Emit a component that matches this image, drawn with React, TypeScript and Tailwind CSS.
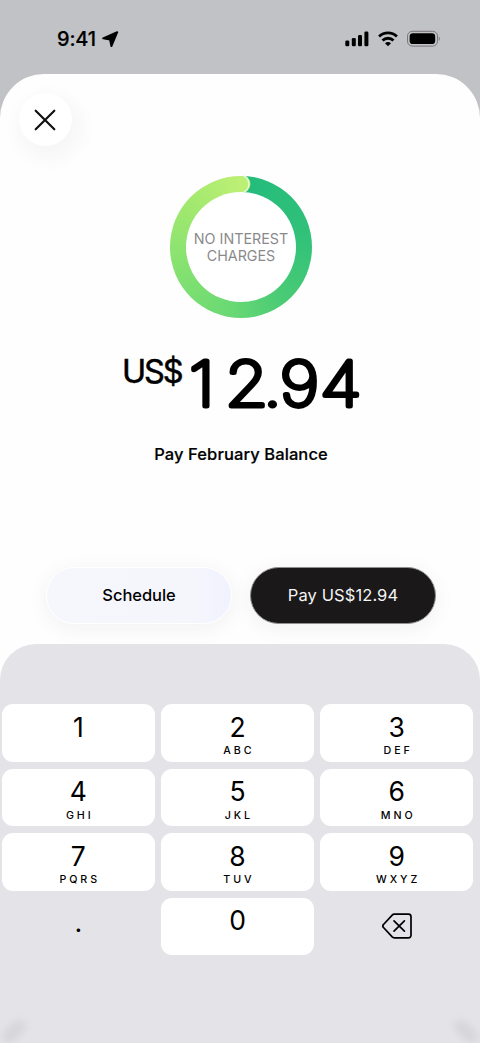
import { clsx } from "clsx";

const keys = [
  { digit: "1", letters: "" },
  { digit: "2", letters: "ABC" },
  { digit: "3", letters: "DEF" },
  { digit: "4", letters: "GHI" },
  { digit: "5", letters: "JKL" },
  { digit: "6", letters: "MNO" },
  { digit: "7", letters: "PQRS" },
  { digit: "8", letters: "TUV" },
  { digit: "9", letters: "WXYZ" },
];

function StatusBar() {
  return (
    <div className="flex h-[74px] shrink-0 items-start justify-between pt-[29px] pr-[40px] pl-[57px]">
      <div className="flex items-center gap-[6px]">
        <span className="text-[20px] leading-[20px] font-medium tracking-[-0.2px] [-webkit-text-stroke:0.2px_#000]">
          9:41
        </span>
        <svg width="17" height="17" viewBox="0 0 17 17">
          <path
            d="M1.2 7.3 15.2 1.2 9.4 15 8.1 8.6z"
            fill="#000"
            stroke="#000"
            strokeWidth="2"
            strokeLinejoin="round"
          />
        </svg>
      </div>
      <div className="flex items-center gap-[9px] pt-[1px]">
        <svg width="24" height="17" viewBox="0 0 24 17">
          <rect x="0.3" y="10.5" width="4" height="5.8" rx="1.3" />
          <rect x="6.8" y="8" width="4" height="8.3" rx="1.3" />
          <rect x="13" y="5" width="4" height="11.3" rx="1.3" />
          <rect x="19.4" y="1.5" width="4" height="14.8" rx="1.3" />
        </svg>
        <svg width="20" height="17" viewBox="0 0 20 17" fill="none" stroke="#000" strokeWidth="2.8">
          <path d="M1.1 6.5a12.6 12.6 0 0 1 17.8 0" />
          <path d="M4.5 10.5a7.8 7.8 0 0 1 11 0" />
          <path d="M10 16.2 7 13.3a4.2 4.2 0 0 1 6 0z" fill="#000" stroke="none" />
        </svg>
        <svg width="33" height="17" viewBox="0 0 33 17">
          <rect x="0.5" y="1.3" width="30" height="14.8" rx="4.8" fill="none" stroke="#77757b" />
          <rect x="2.6" y="3.3" width="25.6" height="10.8" rx="3.4" />
          <path d="M31.8 6.7v4c1.3-.6 1.3-3.4 0-4z" fill="#77757b" />
        </svg>
      </div>
    </div>
  );
}

function InterestRing() {
  return (
    <div className="relative flex size-[144px] items-center justify-center">
      <div className="absolute inset-[1px] rounded-full bg-[conic-gradient(from_4deg,#24bb7b_0deg,#32c279_80deg,#4bcb75_140deg,#69d974_185deg,#87e270_250deg,#a4e96f_310deg,#bdf075_356deg)]" />
      <div className="absolute inset-[17px] rounded-full bg-white" />
      <svg className="absolute inset-0" width="144" height="144" viewBox="0 0 144 144">
        <path d="M72 1h1.5a7.9 7.9 0 0 1 0 15.9H72z" fill="#bcef76" />
        <path d="M74.5 1c7 1.6 7 14.5 0 16" fill="none" stroke="#e4fbd3" strokeWidth="1.4" />
      </svg>
      <p className="relative text-center text-[14.3px] leading-[17px] text-[#8a8a8c]">
        NO INTEREST
        <br />
        CHARGES
      </p>
    </div>
  );
}

function Price() {
  return (
    <div className="flex items-start text-black">
      <span className="mt-[5px] w-[60px] text-[32.5px] leading-[34px] tracking-[-2.2px] [-webkit-text-stroke:0.5px_#000]">
        US$
      </span>
      {/* the round joins soften the ends of the figures */}
      <svg
        className="ml-[4px] overflow-visible"
        width="174"
        height="66"
        viewBox="0 0 174 66"
        stroke="#000"
        strokeWidth="5"
        strokeLinejoin="round"
        strokeLinecap="round"
      >
        <text x="2.6 34.5 68.2 82.9 118.6" y="55.5" fontSize="61.8" fontWeight="100" transform="scale(1.13 1)">
          12.94
        </text>
      </svg>
    </div>
  );
}

function Key({ digit, letters, className }: { digit: string; letters: string; className?: string }) {
  return (
    <button
      type="button"
      className={clsx("flex h-[57.5px] flex-col items-center rounded-[11px] bg-white pt-[8.5px]", className)}
    >
      <span className="text-[26.5px] leading-[29px]">{digit}</span>
      {letters && (
        <span className="mt-[2.5px] pl-[2.9px] text-[10.7px] leading-[13px] font-medium tracking-[2.9px]">
          {letters}
        </span>
      )}
    </button>
  );
}

function Keypad() {
  return (
    <div className="relative h-[399px] shrink-0 overflow-hidden rounded-t-[36px] bg-[#e4e4e8] pt-[60px] pr-[7px] pl-[2px]">
      <div className="grid grid-cols-3 gap-x-[6.7px] gap-y-[7px]">
        {keys.map((key) => (
          <Key key={key.digit} {...key} />
        ))}
        <button type="button" className="flex h-[57.5px] items-center justify-center text-[27px] leading-[28px]">
          <span className="-mt-[6px]">.</span>
        </button>
        <Key digit="0" letters="" />
        <button type="button" className="flex h-[57.5px] items-center justify-center" aria-label="Delete">
          <svg
            width="30"
            height="26"
            viewBox="0 0 30 26"
            fill="none"
            stroke="#000"
            strokeWidth="1.7"
            strokeLinecap="round"
            strokeLinejoin="round"
          >
            <path d="M12.3 1.2h14.2a2.5 2.5 0 0 1 2.5 2.5v18.6a2.5 2.5 0 0 1-2.5 2.5H12.3a3 3 0 0 1-2.1-.9L1.5 14.5a2 2 0 0 1 0-3l8.7-9.4a3 3 0 0 1 2.1-.9z" />
            <path d="m12 7.9 10.4 10.2M22.4 7.9 12 18.1" />
          </svg>
        </button>
      </div>
      {/* soft shade in the bottom corners */}
      <div className="absolute bottom-[5px] left-0 h-[13px] w-[28px] -rotate-45 rounded-full bg-[#d5d5d9] blur-[4px]" />
      <div className="absolute right-0 bottom-[5px] h-[13px] w-[28px] rotate-45 rounded-full bg-[#d5d5d9] blur-[4px]" />
    </div>
  );
}

export default function App() {
  return (
    <div className="flex h-[1043px] w-[480px] flex-col overflow-hidden bg-[#c1c2c6] font-[Inter,sans-serif] text-black">
      <StatusBar />
      <main className="flex flex-1 flex-col rounded-t-[44px] bg-[#fefefe]">
        <div className="flex h-[101px] shrink-0 pt-[19px] pl-[18.5px]">
          <button
            type="button"
            aria-label="Close"
            className="flex size-[53px] items-center justify-center rounded-full bg-white shadow-[4px_8px_20px_4px_rgba(60,50,80,0.045)]"
          >
            <svg width="22" height="22" viewBox="0 0 22 22" stroke="#111" strokeWidth="2.2" strokeLinecap="round">
              <path d="M1.7 1.7 20.3 20.3M20.3 1.7 1.7 20.3" />
            </svg>
          </button>
        </div>
        <div className="flex flex-col items-center pl-[2px]">
          <InterestRing />
          <div className="mt-[31px] h-[66px]">
            <Price />
          </div>
          <p className="mt-[27px] text-[16.5px] leading-[22px] font-medium tracking-[0.1px] [-webkit-text-stroke:0.2px_#000]">
            Pay February Balance
          </p>
        </div>
        <div className="mt-auto mb-[20px] flex gap-[18px] pr-[44px] pl-[46px]">
          <button
            type="button"
            className="h-[57px] flex-1 rounded-full border border-white bg-[linear-gradient(90deg,#f6f6fd_0%,#f5f6fc_80%,#f0f2fe_100%)] text-[16.5px] font-medium tracking-[-0.05px] shadow-[0_4px_22px_rgba(60,40,60,0.06)]"
          >
            Schedule
          </button>
          <button
            type="button"
            className="h-[57px] flex-1 rounded-full border border-[#8f8e90] bg-[#1a1819] text-[16.5px] tracking-[0.1px] text-[#f4f4f4] shadow-[0_4px_22px_rgba(60,40,60,0.06)]"
          >
            Pay US$12.94
          </button>
        </div>
        <Keypad />
      </main>
    </div>
  );
}
